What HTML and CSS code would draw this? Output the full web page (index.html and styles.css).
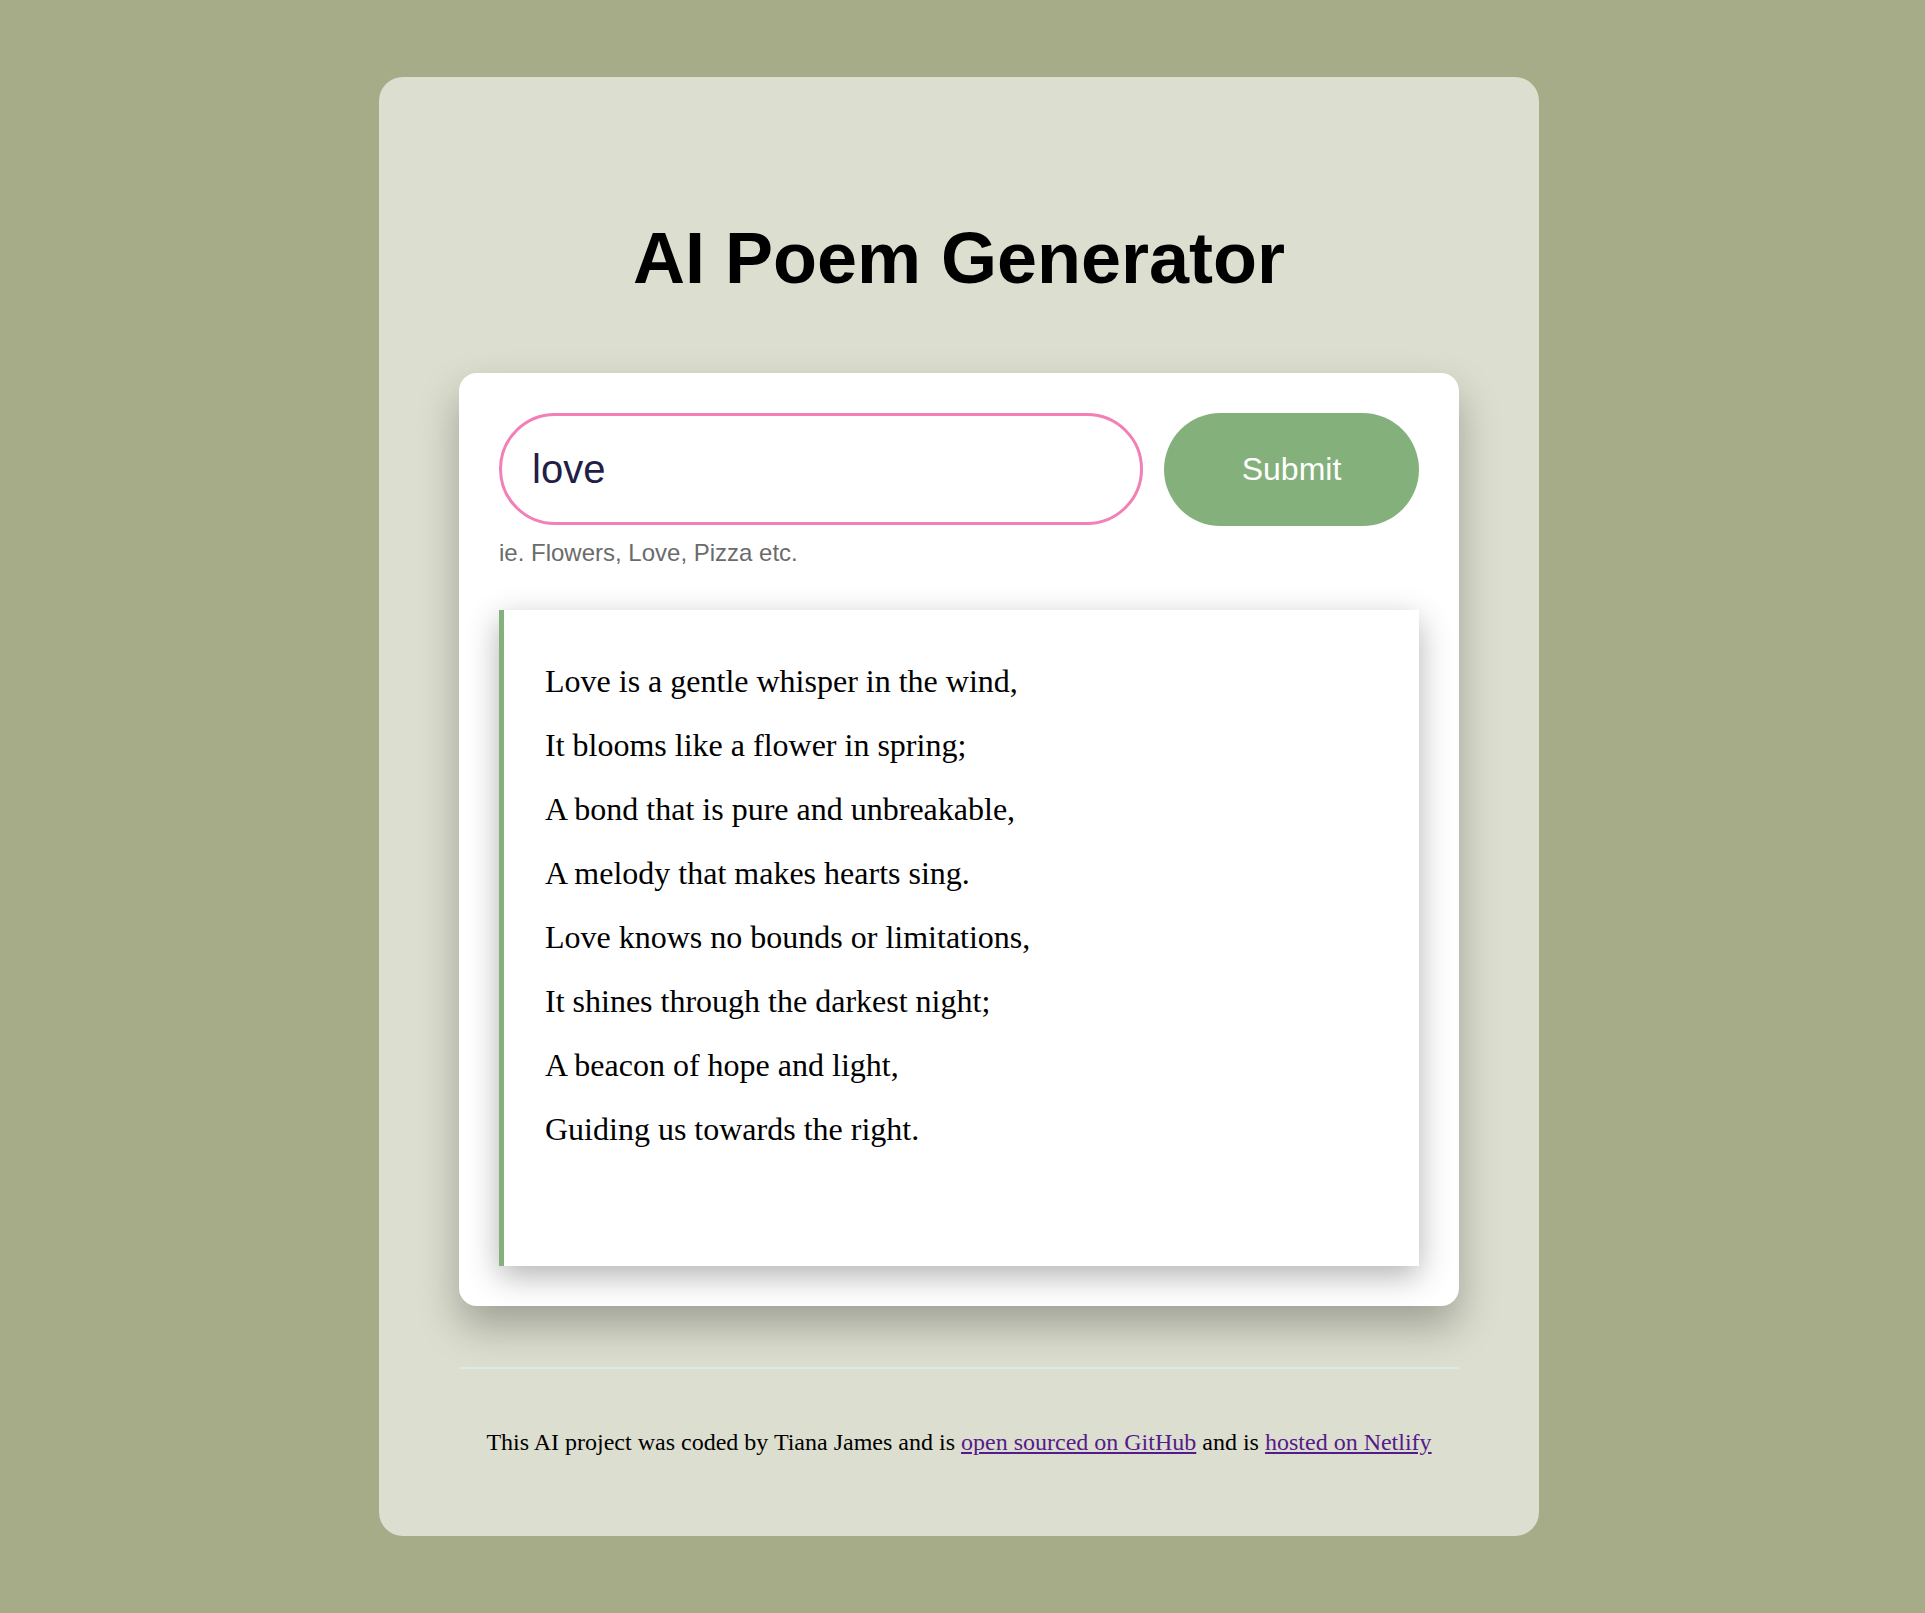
FILE: index.html
```html
<!DOCTYPE html>
<html lang="en">
<head>
<meta charset="utf-8">
<title>AI Poem Generator</title>
<link rel="stylesheet" href="styles.css">
</head>
<body>
<div class="container">
  <h1 class="title">AI Poem Generator</h1>
  <div class="card">
    <form class="search-form">
      <input class="search-input" type="text" value="love" aria-label="Topic">
      <button class="submit-btn" type="button">Submit</button>
    </form>
    <p class="hint">ie. Flowers, Love, Pizza etc.</p>
    <div class="poem">Love is a gentle whisper in the wind,<br>It blooms like a flower in spring;<br>A bond that is pure and unbreakable,<br>A melody that makes hearts sing.<br>Love knows no bounds or limitations,<br>It shines through the darkest night;<br>A beacon of hope and light,<br>Guiding us towards the right.<br><br></div>
  </div>
  <hr class="divider">
  <footer class="footer">This AI project was coded by Tiana James and is <a href="#" class="link">open sourced on GitHub</a> and is <a href="#" class="link">hosted on Netlify</a></footer>
</div>
</body>
</html>
```
FILE: styles.css
```css
html, body {
  margin: 0;
  padding: 0;
}
body {
  background: #a6ac87;
  padding: 77px 7px 77px 0;
  font-family: "Liberation Serif", "Times New Roman", serif;
}
.container {
  width: 1160px;
  box-sizing: border-box;
  margin: 0 auto;
  background: #dcdecf;
  border-radius: 24px;
  padding: 0 80px 80px;
  display: flex;
  flex-direction: column;
}
.title {
  font-family: "Liberation Sans", Arial, sans-serif;
  font-weight: 700;
  font-size: 72px;
  line-height: 83px;
  text-align: center;
  margin: 140px 0 73px;
  color: #000;
}
.card {
  background: #fff;
  border-radius: 18px;
  padding: 40px;
  box-shadow: 0 20px 40px rgba(0, 0, 0, 0.28);
}
.search-form {
  display: flex;
  gap: 21px;
  margin: 0;
}
.search-input {
  width: 644px;
  height: 112px;
  box-sizing: border-box;
  border: 3px solid #f27fb5;
  border-radius: 60px;
  padding: 0 30px;
  font-family: "Liberation Sans", Arial, sans-serif;
  font-size: 40px;
  color: #221e44;
  caret-color: #221e44;
  outline: none;
  background: #fff;
  -webkit-appearance: none;
  appearance: none;
}
.submit-btn {
  flex: 1;
  height: 113px;
  border: none;
  border-radius: 60px;
  background: #84b07b;
  color: #fff;
  font-family: "Liberation Sans", Arial, sans-serif;
  font-size: 32px;
  cursor: pointer;
}
.hint {
  margin: 13px 0 0;
  font-family: "Liberation Sans", Arial, sans-serif;
  font-size: 24px;
  line-height: 27.6px;
  color: #6b6b6b;
}
.poem {
  margin-top: 43px;
  background: #fff;
  border-left: 5px solid #84b07b;
  padding: 39px 40px 41px 41px;
  font-size: 32px;
  line-height: 64px;
  color: #000;
  box-shadow: 0 10px 30px rgba(0, 0, 0, 0.3);
}
.divider {
  margin: 61px 0 0;
  border: none;
  height: 2px;
  background: #dde8ea;
}
.footer {
  margin-top: 60px;
  text-align: center;
  font-size: 24px;
  line-height: 27.6px;
  color: #000;
}
.link {
  color: #551a8b;
  text-decoration: underline;
}
```
